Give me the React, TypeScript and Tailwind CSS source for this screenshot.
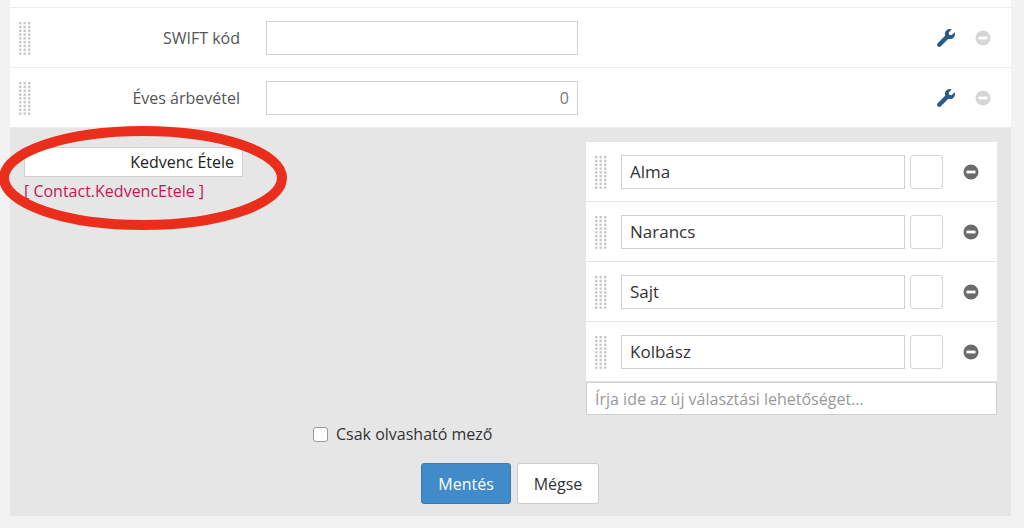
import React from "react";

const Grip = () => (
  <svg width="14" height="34" viewBox="0 0 14 34" className="shrink-0">
    {Array.from({ length: 9 }).map((_, r) =>
      [0, 1, 2].map((c) => (
        <rect key={r + "-" + c} x={1 + c * 4.5} y={1 + r * 3.8} width="2.4" height="2.4" fill="#c8c8c8" />
      ))
    )}
  </svg>
);

const Minus = ({ color }: { color: string }) => (
  <svg width="16" height="16" viewBox="0 0 16 16">
    <circle cx="8" cy="8" r="7.5" fill={color} />
    <rect x="3.5" y="6.6" width="9" height="2.8" fill="#fff" />
  </svg>
);

const Wrench = () => (
  <svg width="18" height="18" viewBox="0 0 512 512">
    <path
      fill="#2a5b8c"
      d="M507.7 109.1c-2.2-9-13.5-12.1-20.1-5.5l-74.4 74.4-67.9-11.3-11.3-67.9 74.4-74.4c6.6-6.6 3.4-17.9-5.7-20.2-47.4-11.7-99.6.9-136.6 37.9-39.6 39.6-50.5 97.1-34.1 147.2L18.7 402.8c-25 25-25 65.5 0 90.5s65.5 25 90.5 0l213.2-213.2c50.1 16.7 107.5 5.7 147.4-34.2 37.1-37.1 49.7-89.3 37.9-136.8z"
    />
  </svg>
);

function FieldRow({ label, value }: { label: string; value?: string }) {
  return (
    <div className="flex items-center h-[60px] border-b border-[#ececec] pl-[8px] pr-[20px]">
      <Grip />
      <div className="w-[208px] text-right text-[16px] text-[#555]">{label}</div>
      <div className="ml-[26px] w-[312px] h-[34px] border border-[#cfcfcf] bg-white flex items-center justify-end px-[8px] text-[16px] text-[#777]">
        {value}
      </div>
      <div className="flex-1" />
      <Wrench />
      <div className="ml-[20px]"><Minus color="#d6d6d6" /></div>
    </div>
  );
}

function Option({ text }: { text: string }) {
  return (
    <div className="flex items-center h-[60px] bg-white border-b border-[#e4e4e4] pl-[8px] pr-[18px]">
      <Grip />
      <div className="ml-[13px] w-[284px] h-[34px] border border-[#cfcfcf] bg-white flex items-center px-[8px] text-[17px] text-[#333]">
        {text}
      </div>
      <div className="ml-[5px] w-[33px] h-[34px] border border-[#d6d6d6] rounded-[3px] bg-white" />
      <div className="ml-[20px]"><Minus color="#6b6b6b" /></div>
    </div>
  );
}

export default function App() {
  return (
    <div className="w-[1024px] h-[528px] bg-[#f2f2f2] flex overflow-hidden relative" style={{ fontFamily: "'Open Sans', sans-serif" }}>
      <div className="ml-[10px] w-[1001px] flex flex-col">
        <div className="h-[8px] bg-white border-b border-[#ececec]" />
        <div className="bg-white">
          <FieldRow label="SWIFT kód" />
          <FieldRow label="Éves árbevétel" value="0" />
        </div>
        <div className="bg-[#e6e6e6] h-[388px] flex flex-col">
          <div className="flex">
            <div className="pl-[14px] pt-[19px] w-[576px]">
              <div className="w-[219px] h-[30px] bg-white border border-[#d0d0d0] flex items-center justify-end px-[8px] text-[16px] text-[#222]">
                Kedvenc Étele
              </div>
              <div className="mt-[2px] text-[16px] text-[#c2185b]">[ Contact.KedvencEtele ]</div>
            </div>
            <div className="pt-[14px] w-[411px]">
              <Option text="Alma" />
              <Option text="Narancs" />
              <Option text="Sajt" />
              <Option text="Kolbász" />
              <div className="h-[33px] bg-white border border-[#cfcfcf] flex items-center px-[8px] text-[16px] text-[#999]">
                Írja ide az új választási lehetőséget...
              </div>
            </div>
          </div>
          <div className="flex items-center gap-[8px] ml-[303px] mt-[7px] text-[16px] text-[#333]">
            <div className="w-[15px] h-[15px] bg-white border border-[#999] rounded-[3px]" />
            Csak olvasható mező
          </div>
          <div className="flex gap-[6px] ml-[411px] mt-[17px]">
            <div className="w-[90px] h-[41px] bg-[#428bca] border border-[#357ebd] rounded-[3px] text-white text-[16px] flex items-center justify-center">Mentés</div>
            <div className="w-[82px] h-[41px] bg-white border border-[#ccc] rounded-[3px] text-[#333] text-[16px] flex items-center justify-center">Mégse</div>
          </div>
        </div>
      </div>
      <svg className="absolute left-0 top-0 pointer-events-none" width="300" height="240">
        <ellipse cx="143" cy="178" rx="139" ry="47" fill="none" stroke="#ea2e1b" strokeWidth="10" />
      </svg>
    </div>
  );
}
